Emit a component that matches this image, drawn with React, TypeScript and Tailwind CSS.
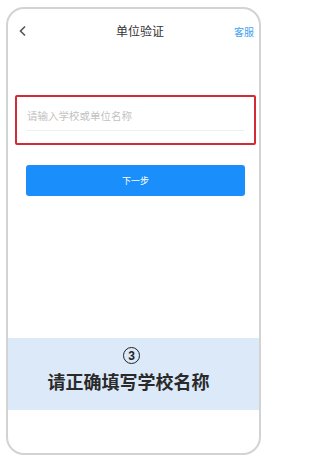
import React from "react";

const App = () => {
  return (
    <div
      className="w-[267px] h-[467px] bg-white pt-[7px] pl-[6px]"
      style={{ fontFamily: '"Noto Sans CJK SC", "Noto Sans", sans-serif' }}
    >
      <div className="w-[255px] h-[448px] border-2 border-[#d3d3d3] rounded-[18px] overflow-hidden flex flex-col">
        {/* header */}
        <div className="h-[44px] flex items-center justify-between pl-[9px] pr-[5px] shrink-0">
          <svg width="10" height="12" viewBox="0 0 10 12" className="ml-[1px]">
            <path d="M7 1.5 L2.5 6 L7 10.5" fill="none" stroke="#555" strokeWidth="1.6" />
          </svg>
          <span className="text-[12px] text-[#333] ml-[18px]">单位验证</span>
          <span className="text-[10px] text-[#3ea0f0]">客服</span>
        </div>

        {/* input box */}
        <div className="mt-[42px] ml-[7px] w-[241px] h-[50px] border-2 border-[#d22a36] rounded-[2px] px-[10px] pt-[11px] shrink-0">
          <div className="border-b border-[#eeeeee] pb-[6px] text-[10.5px] leading-[16px] text-[#c2c2c2]">
            请输入学校或单位名称
          </div>
        </div>

        {/* button */}
        <div className="mt-[20px] ml-[18px] w-[219px] h-[31px] bg-[#1a8ffb] rounded-[3px] flex items-center justify-center text-white text-[9px] shrink-0">
          下一步
        </div>

        {/* tip band */}
        <div className="mt-[142px] h-[72px] bg-[#dce9f8] flex flex-col items-center pt-[9px] gap-[5px] shrink-0">
          <span
            className="w-[17px] h-[17px] rounded-full border-[1.5px] border-[#222] flex items-center justify-center text-[12px] leading-none font-bold text-[#222] ml-[-4px]"
            style={{ fontFamily: '"Liberation Sans", sans-serif' }}
          >
            3
          </span>
          <span className="text-[18px] leading-[24px] font-bold text-[#2a2a2a] ml-[-10px]">
            请正确填写学校名称
          </span>
        </div>
      </div>
    </div>
  );
};

export default App;
